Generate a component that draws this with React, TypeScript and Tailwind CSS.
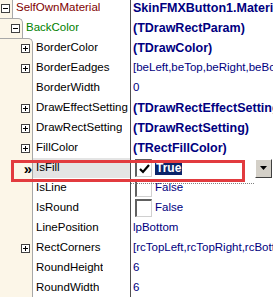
import React from "react";

type Row = {
  name: string;
  value: string;
  level: 0 | 1 | 2;
  expander?: "plus" | "minus";
  nameColor?: string;
  bold?: boolean;
  check?: boolean;
  selected?: boolean;
};

const rows: Row[] = [
  { name: "SelfOwnMaterial", value: "SkinFMXButton1.MaterialDefault", level: 0, expander: "minus", nameColor: "text-[#800000]", bold: true },
  { name: "BackColor", value: "(TDrawRectParam)", level: 1, expander: "minus", nameColor: "text-[#008000]", bold: true },
  { name: "BorderColor", value: "(TDrawColor)", level: 2, expander: "plus", bold: true },
  { name: "BorderEadges", value: "[beLeft,beTop,beRight,beBottom]", level: 2, expander: "plus" },
  { name: "BorderWidth", value: "0", level: 2 },
  { name: "DrawEffectSetting", value: "(TDrawRectEffectSetting)", level: 2, expander: "plus", bold: true },
  { name: "DrawRectSetting", value: "(TDrawRectSetting)", level: 2, expander: "plus", bold: true },
  { name: "FillColor", value: "(TRectFillColor)", level: 2, expander: "plus", bold: true },
  { name: "IsFill", value: "True", level: 2, check: true, selected: true },
  { name: "IsLine", value: "False", level: 2, check: true },
  { name: "IsRound", value: "False", level: 2, check: true },
  { name: "LinePosition", value: "lpBottom", level: 2 },
  { name: "RectCorners", value: "[rcTopLeft,rcTopRight,rcBottomLeft,rcBottomRight]", level: 2, expander: "plus" },
  { name: "RoundHeight", value: "6", level: 2 },
  { name: "RoundWidth", value: "6", level: 2 },
];

function Expander({ kind }: { kind: "plus" | "minus" }) {
  return (
    <div className="relative w-[9px] h-[9px] border border-[#404040] bg-white shrink-0">
      <div className="absolute left-[1px] top-[3px] w-[5px] h-[1px] bg-black" />
      {kind === "plus" && <div className="absolute left-[3px] top-[1px] w-[1px] h-[5px] bg-black" />}
    </div>
  );
}

function CheckBox({ checked }: { checked: boolean }) {
  return (
    <div className="w-[17px] h-[18px] ml-[4px] shrink-0 border-t-2 border-l-2 border-t-[#606060] border-l-[#606060] border-b border-r border-b-[#d0d0d0] border-r-[#d0d0d0] bg-white flex items-center justify-center">
      {checked && (
        <svg width="11" height="10" viewBox="0 0 11 10">
          <path d="M1 5 L4 8 L10 1" stroke="black" strokeWidth="2.2" fill="none" />
        </svg>
      )}
    </div>
  );
}

export default function App() {
  const gutterW = ["w-[13px]", "w-[23px]", "w-[33px]"];
  return (
    <div className="relative w-[273px] h-[297px] overflow-hidden bg-white font-['Liberation_Sans',Arial,sans-serif] text-[11.5px] leading-none">
      <div className="-mt-[2px]">
        {rows.map((r, i) => (
          <div key={i} className="flex h-[20px]">
            <div className={`flex w-[130px] shrink-0 ${r.selected ? "bg-[#e4e4e4]" : ""}`}>
              <div
                className={`${gutterW[r.level]} shrink-0 bg-[#fcf6e8] border-r border-[#a8a8a8] flex items-center justify-end ${r.level === 1 ? "rounded-tr-[5px] border-t" : ""} ${r.level === 2 && i === 2 ? "rounded-tr-[5px] border-t" : ""}`}
              >
                {r.expander && (
                  <div className="mr-[2px]">
                    <Expander kind={r.expander} />
                  </div>
                )}
                {r.selected && <span className="mr-0 font-bold text-[15px] text-black leading-none">»</span>}
              </div>
              <div className={`pl-[3px] flex items-center whitespace-nowrap overflow-hidden ${r.nameColor ?? "text-black"}`}>
                {r.name}
              </div>
            </div>
            <div className="flex-1 border-l border-[#505050] flex items-center whitespace-nowrap overflow-hidden min-w-0">
              {r.check ? (
                <>
                  <CheckBox checked={r.value === "True"} />
                  {r.selected ? (
                    <span className="ml-[3px] px-[1px] py-[1px] bg-[#0a246a] text-white font-bold text-[12px]">{r.value}</span>
                  ) : (
                    <span className="ml-[3px] text-[#000080]">{r.value}</span>
                  )}
                  {r.selected && (
                    <div className="ml-auto mr-[1px] w-[17px] h-[19px] bg-[#d4d0c8] border-t border-l border-t-white border-l-white border-b border-r border-b-[#404040] border-r-[#404040] flex items-center justify-center">
                      <svg width="7" height="4" viewBox="0 0 7 4">
                        <path d="M0 0 H7 L3.5 4 Z" fill="black" />
                      </svg>
                    </div>
                  )}
                </>
              ) : (
                <span className={`pl-[2px] text-[#000080] ${r.bold ? "font-bold text-[12.5px]" : ""}`}>{r.value}</span>
              )}
            </div>
          </div>
        ))}
      </div>
      <div className="absolute left-[131px] top-[183px] w-[123px] border-b border-dotted border-[#808080]" />
      <div className="absolute left-[11px] top-[160px] w-[234px] h-[22px] border-[3px] border-[#e23b3f]" />
    </div>
  );
}
